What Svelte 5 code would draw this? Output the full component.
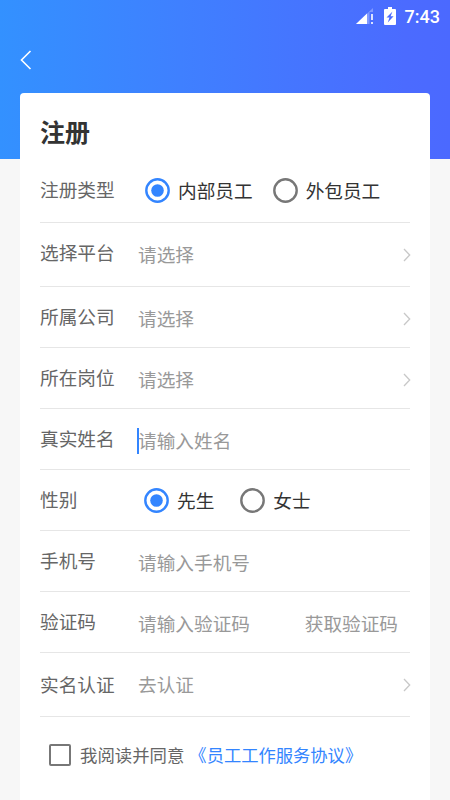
<script lang="ts">
  type Row = {
    label: string;
    kind: 'radio' | 'select' | 'input';
    height: number;
    options?: string[];
    text?: string;
    action?: string;
    focused?: boolean;
  };

  const rows: Row[] = [
    { label: '注册类型', kind: 'radio', height: 65, options: ['内部员工', '外包员工'] },
    { label: '选择平台', kind: 'select', height: 64, text: '请选择' },
    { label: '所属公司', kind: 'select', height: 61, text: '请选择' },
    { label: '所在岗位', kind: 'select', height: 61, text: '请选择' },
    { label: '真实姓名', kind: 'input', height: 61, text: '请输入姓名', focused: true },
    { label: '性别', kind: 'radio', height: 61, options: ['先生', '女士'] },
    { label: '手机号', kind: 'input', height: 61, text: '请输入手机号' },
    { label: '验证码', kind: 'input', height: 61, text: '请输入验证码', action: '获取验证码' },
    { label: '实名认证', kind: 'select', height: 64, text: '去认证' },
  ];

  let selected: Record<string, string> = $state({ 注册类型: '内部员工', 性别: '先生' });
  let agreed = $state(false);
</script>

<div class="page">
  <header>
    <div class="status">
      <svg class="signal" width="18" height="17" viewBox="0 0 18 17">
        <path d="M17 0V4H13.5V16H0Z" fill="#fff" opacity="0.3" />
        <path d="M0 16L11 5.5V16Z" fill="#fff" />
        <path d="M15.2 6h1.6v6h-1.6zM15.2 14h1.6v2h-1.6z" fill="#fff" />
      </svg>
      <svg class="battery" width="12" height="18" viewBox="0 0 12 18">
        <path d="M4 0h4v2h3q1 0 1 1v14q0 1-1 1H1q-1 0-1-1V3q0-1 1-1h3z" fill="#fff" />
        <path d="M8.5 4.5L2.5 10.5H5.5L3.8 15.5L9.6 9.2H6.6Z" fill="#4b6bff" />
      </svg>
      <span class="time">7:43</span>
    </div>
    <button class="back" aria-label="返回">
      <svg width="12" height="20" viewBox="0 0 12 20">
        <path d="M10.5 1L1.5 10L10.5 19" fill="none" stroke="#fff" stroke-width="1.6" />
      </svg>
    </button>
  </header>

  <main class="card">
    <h1>注册</h1>
    {#each rows as row}
      <div class="row" class:first={row.label === '注册类型'} class:last={row.label === '实名认证'} style="height: {row.height}px">
        <span class="label">{row.label}</span>
        {#if row.kind === 'radio'}
          <div class="options" class:short={row.label === '性别'}>
            {#each row.options ?? [] as option}
              <button
                class="option"
                class:checked={selected[row.label] === option}
                onclick={() => (selected[row.label] = option)}
              >
                <svg class="dot" width="25" height="25" viewBox="0 0 25 25">
                  <circle cx="12.5" cy="12.5" r="11.2" fill="none" stroke="currentColor" stroke-width="2.4" />
                  {#if selected[row.label] === option}
                    <circle cx="12.5" cy="12.5" r="6.3" fill="currentColor" />
                  {/if}
                </svg>
                <span>{option}</span>
              </button>
            {/each}
          </div>
        {:else}
          <span class="value" class:focused={row.focused}>{row.text}</span>
          {#if row.action}
            <span class="action">{row.action}</span>
          {/if}
          {#if row.kind === 'select'}
            <svg class="arrow" width="8" height="14" viewBox="0 0 8 14">
              <path d="M1 1L6.7 7L1 13" fill="none" stroke="#c8c8c8" stroke-width="1.3" />
            </svg>
          {/if}
        {/if}
      </div>
    {/each}

    <div class="agreement">
      <button class="checkbox" class:agreed aria-label="同意" onclick={() => (agreed = !agreed)}></button>
      <span class="terms">我阅读并同意<span class="link">《员工工作服务协议》</span></span>
    </div>
  </main>
</div>

<style>
  :global(body) {
    margin: 0;
    background: #f7f7f7;
  }

  .page {
    height: 800px;
    overflow: hidden;
    font-family: 'Noto Sans CJK SC', sans-serif;
    font-size: 18.67px;
    color: #333;
    background: #f7f7f7;
  }

  button {
    padding: 0;
    border: 0;
    background: none;
    font: inherit;
    color: inherit;
  }

  header {
    box-sizing: border-box;
    height: 159px;
    background: linear-gradient(90deg, #3391ff 0%, #3f80ff 40%, #4b6bff 90%, #4b69ff 100%);
  }

  .status {
    display: flex;
    align-items: center;
    justify-content: flex-end;
    height: 32px;
    padding-right: 10px;
  }

  .signal {
    margin-right: 10px;
  }

  .battery {
    margin-right: 9px;
  }

  .time {
    font-family: Roboto, sans-serif;
    font-size: 18px;
    font-weight: 500;
    line-height: 33px;
    color: #fff;
  }

  .back {
    display: block;
    height: 20px;
    margin: 18px 0 0 20px;
  }

  .back svg {
    display: block;
  }

  .card {
    box-sizing: border-box;
    height: 720px;
    margin: -66px 20px 0;
    padding: 0 20px;
    border-radius: 4px;
    background: #fff;
  }

  h1 {
    margin: 0;
    padding-top: 18px;
    height: 47px;
    font-size: 25px;
    font-weight: 700;
    line-height: 40px;
  }

  .row {
    display: flex;
    align-items: flex-start;
    box-sizing: border-box;
    padding-top: 15px;
    border-bottom: 1px solid #e6e6e6;
    line-height: 28px;
    white-space: nowrap;
  }

  .row.first,
  .row.last {
    padding-top: 17px;
  }

  .label {
    width: 98px;
    color: #666;
  }

  .value {
    position: relative;
    margin-top: 2px;
    color: #999;
  }

  .last .value {
    margin-top: 0;
  }

  .focused::before {
    content: '';
    position: absolute;
    left: -1px;
    top: 2px;
    width: 2px;
    height: 26px;
    background: #3385ff;
  }

  .action {
    margin: 2px 12px 0 auto;
    color: #999;
  }

  .arrow {
    margin: 10px -1px 0 auto;
  }

  .last .arrow {
    margin-top: 8px;
  }

  .options {
    display: flex;
    gap: 20px;
    padding: 1px 0 0 7px;
  }

  .options.short {
    gap: 26px;
    padding-left: 6px;
  }

  .option {
    display: flex;
    align-items: center;
    gap: 8px;
    line-height: 28px;
  }

  .dot {
    color: #777;
  }

  .checked .dot {
    color: #3385ff;
  }

  .agreement {
    display: flex;
    align-items: center;
    height: 76px;
    padding-left: 9px;
    font-size: 17.4px;
    color: #666;
    white-space: nowrap;
  }

  .terms {
    margin-bottom: 2px;
  }

  .checkbox {
    box-sizing: border-box;
    width: 22px;
    height: 22px;
    margin-right: 9px;
    border: 2px solid #777;
    border-radius: 2px;
  }

  .checkbox.agreed {
    border-color: #3385ff;
    background: #3385ff;
  }

  .link {
    margin-left: 5px;
    font-size: 17.3px;
    color: #3385ff;
  }
</style>
